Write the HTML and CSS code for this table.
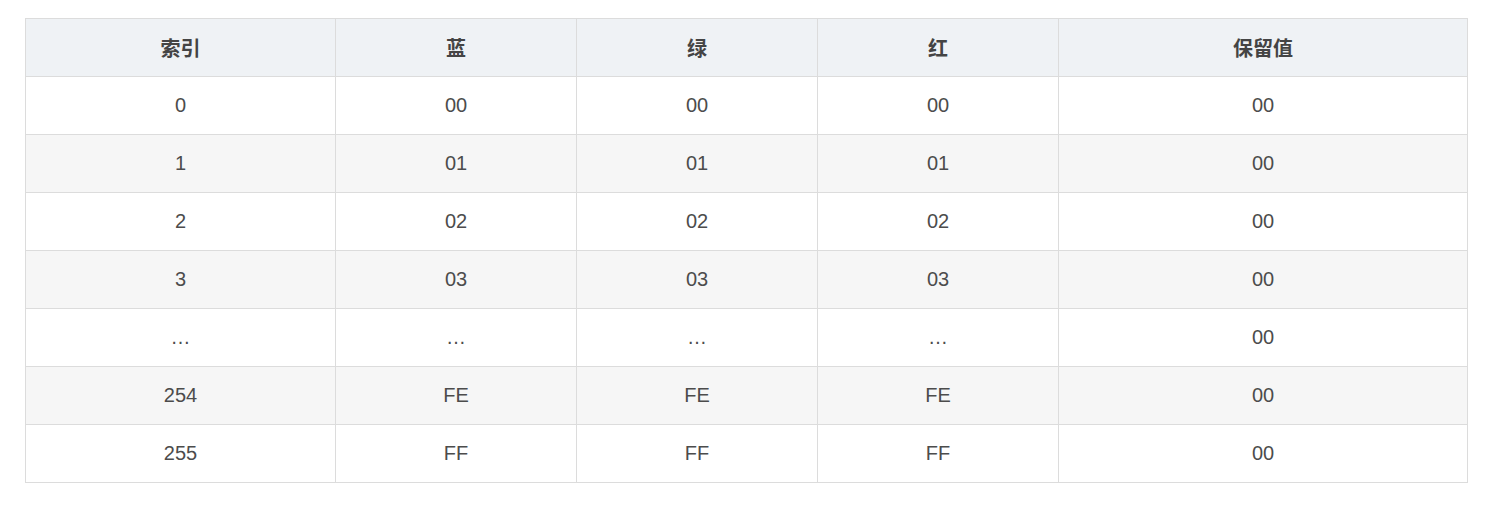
FILE: index.html
```html
<!DOCTYPE html>
<html lang="zh">
<head>
<meta charset="utf-8">
<link rel="stylesheet" href="styles.css">
</head>
<body>
<table class="palette">
  <colgroup>
    <col class="c1"><col class="c2"><col class="c3"><col class="c4"><col class="c5">
  </colgroup>
  <thead>
    <tr><th>索引</th><th>蓝</th><th>绿</th><th>红</th><th>保留值</th></tr>
  </thead>
  <tbody>
    <tr><td>0</td><td>00</td><td>00</td><td>00</td><td>00</td></tr>
    <tr><td>1</td><td>01</td><td>01</td><td>01</td><td>00</td></tr>
    <tr><td>2</td><td>02</td><td>02</td><td>02</td><td>00</td></tr>
    <tr><td>3</td><td>03</td><td>03</td><td>03</td><td>00</td></tr>
    <tr><td>…</td><td>…</td><td>…</td><td>…</td><td>00</td></tr>
    <tr><td>254</td><td>FE</td><td>FE</td><td>FE</td><td>00</td></tr>
    <tr><td>255</td><td>FF</td><td>FF</td><td>FF</td><td>00</td></tr>
  </tbody>
</table>
</body>
</html>
```
FILE: styles.css
```css
html, body {
  margin: 0;
  background: #ffffff;
}
body {
  padding: 18px 24px 0 25px;
  font-family: "Liberation Sans", Arial, "Noto Sans CJK SC", sans-serif;
  color: #4c4c4c;
}
.palette {
  border-collapse: collapse;
  width: 1442px;
  table-layout: fixed;
  font-size: 20px;
}
.c1 { width: 310px; }
.c2, .c3, .c4 { width: 241px; }
.c5 { width: 409px; }
.palette th, .palette td {
  border: 1px solid #dcdcdc;
  height: 58px;
  padding: 0;
  text-align: center;
  vertical-align: middle;
  box-sizing: border-box;
}
.palette th {
  background: #eff2f5;
  font-weight: bold;
  color: #444444;
}
.palette tbody tr:nth-child(even) td {
  background: #f6f6f6;
}
```
